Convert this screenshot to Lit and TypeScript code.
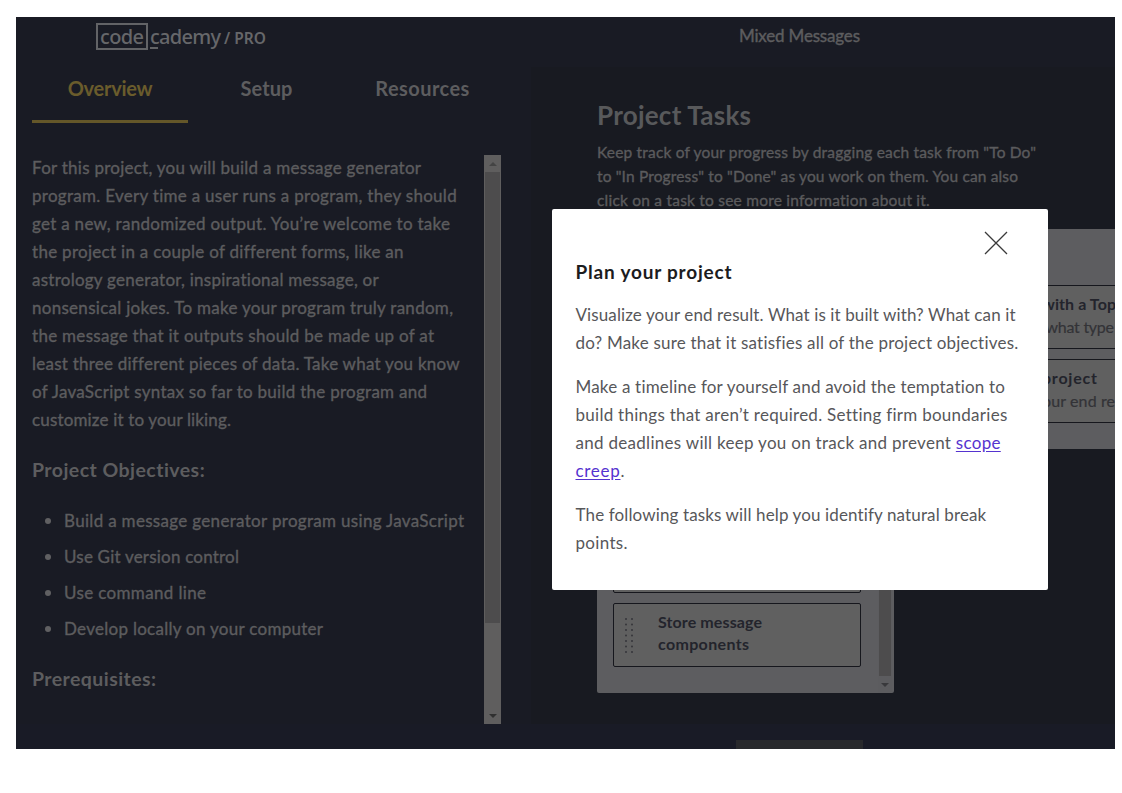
import { LitElement, html, css, svg } from "lit";
import { customElement, property, query } from "lit/decorators.js";

/** One line of text, tracked so that it fills a measured width. */
@customElement("fit-line")
class FitLine extends LitElement {
  static styles = css`
    :host { display: block; white-space: pre; }
    .run { display: inline-block; }
  `;
  @property({ type: Number }) width = 0;
  @query(".run") run!: HTMLElement;

  firstUpdated() {
    const count = (this.textContent ?? "").length;
    const natural = this.run.getBoundingClientRect().width;
    if (count > 1 && this.width) {
      this.run.style.letterSpacing = `${(this.width - natural) / (count - 1)}px`;
    }
  }
  render() {
    return html`<span class="run"><slot></slot></span>`;
  }
}

@customElement("scroll-rail")
class ScrollRail extends LitElement {
  static styles = css`
    :host { display: flex; flex-direction: column; width: 17px; background: #5f5e5e; }
    .end { height: 17px; flex: none; display: flex; align-items: center; justify-content: center; }
    .thumb { margin: 0 1px; background: #4d4c4d; flex: none; }
    .rest { flex: 1; }
    svg { display: block; }
  `;
  @property({ type: Number }) thumb = 0;
  @property() up = "#444";
  @property() down = "#303030";

  render() {
    return html`
      <div class="end"><svg width="8" height="4" viewBox="0 0 8 4">${svg`<path d="M0 4 4 0 8 4z" fill=${this.up} />`}</svg></div>
      <div class="thumb" style="height:${this.thumb}px"></div>
      <div class="rest"></div>
      <div class="end"><svg width="8" height="4" viewBox="0 0 8 4">${svg`<path d="M0 0 4 4 8 0z" fill=${this.down} />`}</svg></div>
    `;
  }
}

type Line = [string, number];

const INTRO: Line[] = [
  ["For this project, you will build a message generator", 389],
  ["program. Every time a user runs a program, they should", 425],
  ["get a new, randomized output. You’re welcome to take", 418],
  ["the project in a couple of different forms, like an", 371],
  ["astrology generator, inspirational message, or", 347],
  ["nonsensical jokes. To make your program truly random,", 421],
  ["the message that it outputs should be made up of at", 402],
  ["least three different pieces of data. Take what you know", 427],
  ["of JavaScript syntax so far to build the program and", 395],
  ["customize it to your liking.", 199],
];
const GOALS: Line[] = [
  ["Build a message generator program using JavaScript", 400],
  ["Use Git version control", 175],
  ["Use command line", 142],
  ["Develop locally on your computer", 259],
];
const HELP: Line[] = [
  ['Keep track of your progress by dragging each task from "To Do"', 439],
  ['to "In Progress" to "Done" as you work on them. You can also', 421],
  ["click on a task to see more information about it.", 333],
];
const TABS: Line[] = [["Overview", 85], ["Setup", 52], ["Resources", 94]];

const lines = (items: Line[]) => items.map(([t, w]) => html`<fit-line width=${w}>${t}</fit-line>`);

@customElement("app-root")
class AppRoot extends LitElement {
  static styles = css`
    :host {
      display: block; box-sizing: border-box; width: 1122px; height: 793px;
      padding: 17px 7px 44px 16px; background: #fff; overflow: hidden;
      font-family: Lato, "Open Sans", sans-serif;
    }
    * { box-sizing: border-box; }
    .screen {
      position: relative; height: 732px; overflow: hidden; background: #191b24; color: #5d5d5f;
      display: grid; grid-template-rows: 50px 657px 25px;
    }
    .top { display: flex; align-items: flex-start; }
    .logo { display: flex; margin: 6px 0 0 80px; width: 643px; color: #66676a; font-family: "Noto Sans", sans-serif; font-size: 20px; font-weight: 500; line-height: 27px; }
    .box { width: 52px; height: 27px; border: 2px solid #626366; padding-left: 2px; line-height: 23px; }
    .rest { padding-left: 2px; width: 76px; line-height: 27px; }
    .rest::after { content: ""; display: block; width: 8px; height: 2px; margin-top: -3px; background: #626366; }
    .pro { font-size: 15.5px; line-height: 31px; font-weight: 600; }
    .name { font-size: 17px; line-height: 38px; -webkit-text-stroke: .4px currentColor; }
    .main { display: grid; grid-template-columns: 515px 1fr; }
    .left { padding: 0 30px 0 16px; display: flex; flex-direction: column; min-height: 0; }
    .tabs { display: grid; grid-template-columns: repeat(3, 156px); height: 56px; flex: none; }
    .tab { display: flex; justify-content: center; font-size: 20px; font-weight: 700; line-height: 42px; padding-left: 1px; border-bottom: 3px solid transparent; }
    .tab.on { color: #6a5c2c; border-color: #645729; padding-left: 0; }
    .reader { margin-top: 32px; flex: 1; display: flex; overflow: hidden; min-height: 0; }
    .copy { width: 452px; flex: none; overflow: hidden; font-size: 17px; line-height: 28px; margin-top: -1px; }
    .intro, .goals { -webkit-text-stroke: .35px currentColor; }
    .h { margin: 0; font-size: 19.5px; font-weight: 700; line-height: 28px; }
    .h.a { margin-top: 22px; }
    .h.b { margin-top: 22px; }
    .goals { list-style: none; margin: 23px 0 0; padding: 0; }
    .goals li { display: flex; align-items: center; gap: 13px; padding-left: 13px; height: 28px; margin-bottom: 8px; }
    .goals li::before { content: ""; width: 6px; height: 6px; border-radius: 50%; background: #606062; }
    .right { background: #181a21; padding: 31px 0 0 66px; }
    .h1 { margin: 0; font-size: 26px; font-weight: 700; line-height: 34px; color: #58595b; }
    .help { font-size: 15.5px; line-height: 24px; margin-top: 8px; -webkit-text-stroke: .35px currentColor; color: #5b5b5d; }
    .board { display: flex; gap: 16px; align-items: flex-start; margin-top: 17px; width: 610px; }
    .col { width: 297px; flex: none; background: #5d5d60; border-radius: 2px; display: flex; }
    .col.todo { height: 464px; }
    .col.doing { height: 220px; padding: 56px 16px 0; flex-direction: column; gap: 10px; }
    .stack { flex: 1; display: flex; flex-direction: column; justify-content: flex-end; gap: 10px; padding: 0 16px 26px; }
    .card { height: 64px; flex: none; border: 1px solid #16171d; border-radius: 2px; background: #606060; color: #23242c; font-size: 16px; line-height: 22px; padding: 7px 0 0 10px; display: flex; gap: 24px; }
    .stack .card { width: 248px; }
    .card b, .card .b { font-weight: 700; }
    .grip { display: block; margin-top: 6px; }
    .col.doing .card { display: block; padding-left: 115px; padding-top: 7px; white-space: nowrap; }
    .sub { color: #333337; line-height: 24px; -webkit-text-stroke: .2px currentColor; }
    scroll-rail.slim { width: 14px; margin-right: 2px; background: #5c5c5f; }
    .foot { background: #191b26; padding: 16px 0 0 720px; }
    .btn { width: 127px; height: 9px; background: #28292c; }
    .modal { position: absolute; left: 535.5px; top: 192px; width: 496px; height: 381px; background: #fff; border-radius: 2px; padding: 20px 24px; color: #57575a; font-size: 17px; line-height: 28px; }
    .close { display: block; margin: 0 14px 0 auto; }
    .title { margin: 1px 0 0; font-size: 19px; font-weight: 700; line-height: 28px; color: #1c1c1e; }
    .p { margin: 15px 0 0; }
    .p + .p { margin-top: 16px; }
    .link { color: #5533cf; text-decoration: underline; text-underline-offset: 2px; }
  `;

  render() {
    const dots = Array.from({ length: 14 }, (_, i) =>
      svg`<circle cx=${(i % 2) * 6 + 2} cy=${Math.floor(i / 2) * 5.5 + 2} r="1" fill="#35353a" />`);
    return html`
      <div class="screen">
        <header class="top">
          <div class="logo">
            <div class="box"><fit-line width="44">code</fit-line></div>
            <div class="rest"><fit-line width="71">cademy</fit-line></div>
            <div class="pro"><fit-line width="42">/ PRO</fit-line></div>
          </div>
          <div class="name"><fit-line width="121">Mixed Messages</fit-line></div>
        </header>
        <main class="main">
          <section class="left">
            <nav class="tabs">
              ${TABS.map(([t, w], i) => html`<div class="tab ${i ? "" : "on"}"><fit-line width=${w}>${t}</fit-line></div>`)}
            </nav>
            <div class="reader">
              <div class="copy">
                <div class="intro">${lines(INTRO)}</div>
                <h3 class="h a"><fit-line width="173">Project Objectives:</fit-line></h3>
                <ul class="goals">${GOALS.map(([t, w]) => html`<li><fit-line width=${w}>${t}</fit-line></li>`)}</ul>
                <h3 class="h b"><fit-line width="124">Prerequisites:</fit-line></h3>
              </div>
              <scroll-rail thumb="451"></scroll-rail>
            </div>
          </section>
          <section class="right">
            <h1 class="h1"><fit-line width="154">Project Tasks</fit-line></h1>
            <div class="help">${lines(HELP)}</div>
            <div class="board">
              <div class="col todo">
                <div class="stack">
                  <div class="card"></div>
                  <div class="card">
                    <svg class="grip" width="10" height="38">${dots}</svg>
                    <div class="b">
                      <fit-line width="104">Store message</fit-line>
                      <fit-line width="91">components</fit-line>
                    </div>
                  </div>
                </div>
                <scroll-rail class="slim" thumb="430" down="#39393c"></scroll-rail>
              </div>
              <div class="col doing">
                <div class="card">
                  <div class="b"><fit-line width="74">with a Top</fit-line></div>
                  <div class="sub"><fit-line width="72"> what type</fit-line></div>
                </div>
                <div class="card">
                  <div class="b"><fit-line width="55">project</fit-line></div>
                  <div class="sub"><fit-line width="73">our end re</fit-line></div>
                </div>
              </div>
            </div>
          </section>
        </main>
        <footer class="foot"><div class="btn"></div></footer>

        <div class="modal" role="dialog">
          <svg class="close" width="28" height="28" viewBox="0 0 28 28">
            <path d="M3 3 25 25M25 3 3 25" stroke="#3a3a3a" stroke-width="1.3" fill="none" />
          </svg>
          <h2 class="title"><fit-line width="156">Plan your project</fit-line></h2>
          <div class="p">
            <fit-line width="440">Visualize your end result. What is it built with? What can it</fit-line>
            <fit-line width="443">do? Make sure that it satisfies all of the project objectives.</fit-line>
          </div>
          <div class="p">
            <fit-line width="430">Make a timeline for yourself and avoid the temptation to</fit-line>
            <fit-line width="431">build things that aren’t required. Setting firm boundaries</fit-line>
            <fit-line width="425">and deadlines will keep you on track and prevent <span class="link">scope</span></fit-line>
            <fit-line width="49"><span class="link">creep</span>.</fit-line>
          </div>
          <div class="p">
            <fit-line width="411">The following tasks will help you identify natural break</fit-line>
            <fit-line width="52">points.</fit-line>
          </div>
        </div>
      </div>
    `;
  }
}
